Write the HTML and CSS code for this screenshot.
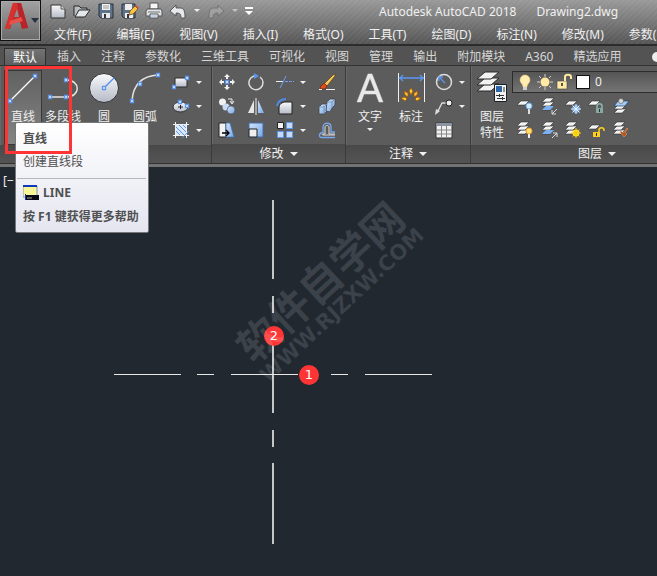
FILE: index.html
```
<!DOCTYPE html>
<html lang="zh-CN">
<head>
<meta charset="UTF-8">
<meta name="viewport" content="width=device-width, initial-scale=1.0">
<title>Autodesk AutoCAD 2018 - Drawing2.dwg</title>
<link rel="stylesheet" href="styles.css">
</head>
<body>

<!-- shapes shared by several icons -->
<svg class="defs" aria-hidden="true">
  <defs>
    <linearGradient id="silver" x1="0" y1="0" x2="0" y2="1">
      <stop offset="0" stop-color="#fbfbfd"/><stop offset="1" stop-color="#b4b9c6"/>
    </linearGradient>
    <linearGradient id="sky" x1="0" y1="0" x2="1" y2="1">
      <stop offset="0" stop-color="#d3e4fa"/><stop offset="1" stop-color="#76a7e6"/>
    </linearGradient>
    <linearGradient id="red" x1="0" y1="0" x2="1" y2="1">
      <stop offset="0" stop-color="#f0443c"/><stop offset="1" stop-color="#8d1219"/>
    </linearGradient>
    <g id="grip"><path d="M-1.5-1.5h3v3h-3z" fill="#fff" stroke="#5c96ee" stroke-width="1.3"/></g>
    <path id="sheet" d="M4 0h8L8 4H0z" fill="#f4f4f4" stroke="#333" stroke-width=".6"/>
    <g id="stack"><use href="#sheet" y="8"/><use href="#sheet" y="4"/><use href="#sheet"/></g>
  </defs>
</svg>

<header class="top">
  <button class="app" aria-label="A">
    <svg width="39" height="39" viewBox="0 0 39 39">
      <path d="M4 27 12 2h8l7 25h-6l-2-6h-8l-2 7zM13 16h5l-2-8z" fill="url(#red)" fill-rule="evenodd"/>
      <path d="M12 2h4l-7 25-5 1z" fill="#d8322f"/>
      <path d="m16 2 4 0 7 25-6 1z" fill="#b9242a"/>
      <path d="m9 20 11-4 2 4-14 4z" fill="#e8524a"/>
      <path d="M30 17h8l-4 5z" fill="#263242"/>
    </svg>
  </button>
  <div class="top-main">
    <div class="titlebar">
      <div class="quick">
        <button aria-label="新建"><svg width="18" height="18"><path d="M2 3h10l4 4v9H2z" fill="url(#silver)" stroke="#333"/><path d="M12 3v4h4" fill="#ddd" stroke="#555"/></svg></button>
        <button aria-label="打开"><svg width="18" height="18"><path d="M1 14V4h5l2 2h6v3" fill="#b9bcc0" stroke="#262626"/><path d="m2 15 4-7h11l-5 7z" fill="#e4e7ea" stroke="#262626"/></svg></button>
        <button aria-label="保存"><svg width="18" height="18"><path d="M2 2h14v14H4l-2-2z" fill="#5e7388" stroke="#26313c"/><path d="M5 2h8v6H5z" fill="#f2f2f2"/><path d="M6 4h6M6 6h6" stroke="#999"/><path d="M5 11h8v5H5z" fill="#e8e8e8"/><path d="M7 12h2v4H7z" fill="#333"/></svg></button>
        <button aria-label="另存为"><svg width="18" height="18"><path d="M1 2h13v14H3l-2-2z" fill="#5e7388" stroke="#26313c"/><path d="M4 2h7v6H4zM4 11h8v5H4z" fill="#eee"/><path d="M6 12h2v4H6z" fill="#333"/><path d="m8 13 1-4 5-5 3 3-5 5z" fill="#f7c545" stroke="#6c461c" stroke-width=".8"/><path d="m14 4 1-1 3 3-1 1z" fill="#d64a34"/></svg></button>
        <button aria-label="打印"><svg width="18" height="18"><path d="M5 1h8v6H5z" fill="#f6f6f6" stroke="#555"/><path d="M2 7h14l1 2v5H1V9z" fill="#dfe2e6" stroke="#555"/><path d="M3 10h12" stroke="#777"/><path d="M5 12h8v4H5z" fill="#fff" stroke="#555"/><path d="M6 14h6" stroke="#78a8e0"/></svg></button>
        <button aria-label="放弃"><svg width="18" height="18"><path d="m1 9 6-6v3h4c4 0 5 3 5 10h-4c0-4-1-5-5-5v3z" fill="#e6e8ec" stroke="#444" stroke-width=".8"/></svg></button>
        <button class="mini" aria-label="放弃列表"><svg width="8" height="6"><path d="M1 1h6L4 4z" fill="#f0f0f0"/></svg></button>
        <button aria-label="重做"><svg width="18" height="18"><path d="m17 9-6-6v3H7c-4 0-5 3-5 10h4c0-4 1-5 5-5v3z" fill="#a0a0a0" stroke="#6c6c6c" stroke-width=".8"/></svg></button>
        <button class="mini" aria-label="重做列表"><svg width="8" height="6"><path d="M1 1h6L4 4z" fill="#c4c4c4"/></svg></button>
        <button class="mini" aria-label="自定义"><svg width="8" height="8"><path d="M0 1h8" stroke="#fff" stroke-width="2"/><path d="M0 4h8L4 8z" fill="#fff"/></svg></button>
      </div>
      <div class="title"><span>Autodesk AutoCAD 2018</span><span>Drawing2.dwg</span></div>
    </div>
    <nav class="menu">
      <button>文件(F)</button>
      <button>编辑(E)</button>
      <button>视图(V)</button>
      <button>插入(I)</button>
      <button>格式(O)</button>
      <button>工具(T)</button>
      <button>绘图(D)</button>
      <button>标注(N)</button>
      <button>修改(M)</button>
      <button>参数(P)</button>
    </nav>
  </div>
</header>

<nav class="tabs">
  <button class="active">默认</button>
  <button>插入</button>
  <button>注释</button>
  <button>参数化</button>
  <button>三维工具</button>
  <button>可视化</button>
  <button>视图</button>
  <button>管理</button>
  <button>输出</button>
  <button>附加模块</button>
  <button>A360</button>
  <button>精选应用</button>
  <button class="more" aria-label="更多"><svg width="16" height="12"><rect width="16" height="10" y="1" rx="5" fill="#eee"/></svg></button>
</nav>

<main class="ribbon">
  <section class="panel draw">
    <div class="tools">
      <button class="big pressed"><svg width="36" height="36"><path d="m5 31 25-25" stroke="#fff" stroke-width="1.300"/><use href="#grip" x="5" y="31"/><use href="#grip" x="30" y="6"/></svg>直线</button>
      <button class="big"><svg width="36" height="36"><path d="M5 27h16c15 0 15-17 0-17" fill="none" stroke="#e4e4e4" stroke-width="1.500"/><use href="#grip" x="5" y="27"/><use href="#grip" x="21" y="27"/><use href="#grip" x="21" y="10"/></svg>多段线</button>
      <button class="big"><svg width="36" height="36"><circle cx="18" cy="18" r="14.500" fill="url(#silver)" stroke="#303236"/><path d="m18 18 10-10" stroke="#4e8bea" stroke-width="1.300"/><use href="#grip" x="18" y="18"/></svg>圆</button>
      <button class="big"><svg width="36" height="36"><path d="M5 31C6 16 14 6 31 5" fill="none" stroke="#e4e4e4" stroke-width="1.500"/><use href="#grip" x="5" y="31"/><use href="#grip" x="13" y="14"/><use href="#grip" x="31" y="5"/></svg>圆弧</button>
      <div class="smalls">
        <button class="drop" aria-label="矩形"><svg width="18" height="18"><path d="M3 5h12v9H3z" fill="url(#silver)" stroke="#2d2d2d"/><use href="#grip" x="2" y="14"/><use href="#grip" x="15" y="5"/></svg></button>
        <button class="drop" aria-label="椭圆"><svg width="18" height="18"><ellipse cx="8.500" cy="10" rx="7.500" ry="5" fill="url(#silver)" stroke="#333"/><path d="M6 10h5M8.500 8v4" stroke="#222"/><use href="#grip" x="8" y="5"/><use href="#grip" x="15" y="9"/></svg></button>
        <button class="drop" aria-label="图案填充"><svg width="18" height="18"><path d="M4 4h10v10H4z" fill="#dce9fb"/><path d="m4 10 4 4M4 6l8 8M7 4l7 7M11 4l3 3" stroke="#5c96ee"/><path d="M1 3.500h16M1 14.500h16M3.500 1v16M14.500 1v16" stroke="#f0f0f0"/><path d="m10 17 7-7" stroke="#5c96ee"/></svg></button>
      </div>
    </div>
    <h2></h2>
  </section>

  <section class="panel modify">
    <div class="tools">
      <button aria-label="移动"><svg width="18" height="18"><path d="M9 1 6 4h2v2h2V4h2zM9 17l-3-3h2v-2h2v2h2zM1 9l3-3v2h2v2H4v2zM17 9l-3-3v2h-2v2h2v2z" fill="#f0f0f0"/><use href="#grip" x="9" y="9"/></svg></button>
      <button aria-label="旋转"><svg width="18" height="18"><path d="M13 4a7 7 0 1 1-6-1" fill="none" stroke="#ddd" stroke-width="1.500"/><path d="m7 0 5 3-5 3z" fill="#5c96ee"/></svg></button>
      <button class="drop" aria-label="修剪"><svg width="18" height="18"><path d="M0 8.500h7" stroke="#eee"/><path d="M4 15 10 3" stroke="#6aa0f0"/><path d="M9 8.500h9" stroke="#6aa0f0" stroke-dasharray="3 1"/></svg></button>
      <button aria-label="删除"><svg width="18" height="18"><path d="m6 11 9-9 2-1v2L9 13z" fill="#f6c659" stroke="#5b3a17" stroke-width=".7"/><path d="m6 10 3 3-2 3-4 0-1-2z" fill="#dd4d18" stroke="#6b210a" stroke-width=".7"/><path d="M1 16.500h3M8 16.500h9" stroke="#eee"/></svg></button>
      <button aria-label="复制"><svg width="18" height="18"><circle cx="4.500" cy="5" r="3.500" fill="#f1f1f4"/><circle cx="8" cy="10" r="3.500" fill="#c9dcf6"/><circle cx="13" cy="13" r="4" fill="url(#sky)" stroke="#444" stroke-width=".6"/><path d="M10 2h4v4m-2-2 2 3 2-3" fill="none" stroke="#eee"/></svg></button>
      <button aria-label="镜像"><svg width="18" height="18"><path d="M7 3v13H1z" fill="#e7e7ea"/><path d="M11 3v13h6z" fill="url(#sky)"/><path d="M9 1v17" stroke="#eee"/></svg></button>
      <button class="drop" aria-label="圆角"><svg width="18" height="18"><path d="M3 17V11c0-4 3-6 7-6h6v12z" fill="url(#silver)" stroke="#222"/><path d="M1 9c1-5 4-7 9-7" fill="none" stroke="#4e8bea" stroke-width="2"/></svg></button>
      <button aria-label="分解"><svg width="18" height="18"><path d="m1 10 3-3h5v7l-3 3H1z" fill="url(#sky)" stroke="#444" stroke-width=".8"/><path d="m9 5 3-3h5v6l-3 3-2 4-4-1z" fill="url(#sky)" stroke="#444" stroke-width=".8"/><path d="M1 10h5v7M6 10l3-3M9 5h5v6M14 5l3-3" fill="none" stroke="#6e8bad" stroke-width=".8"/></svg></button>
      <button aria-label="拉伸"><svg width="18" height="18"><path d="M1 2h7v14H1z" fill="#f2f2f2" stroke="#222"/><path d="M8 2h4l4 14H8z" fill="url(#sky)" stroke="#3570bd" stroke-width=".7"/><path d="M4 12h7m-3-3 3 3-3 3" fill="none" stroke="#000" stroke-width="1.300"/></svg></button>
      <button aria-label="缩放"><svg width="18" height="18"><path d="M2 2h14v14H2z" fill="url(#sky)" stroke="#3e6da9"/><path d="M2 8h8v8H2z" fill="#eee" stroke="#222"/></svg></button>
      <button class="drop" aria-label="阵列"><svg width="18" height="18"><path d="M1.500 1.500h6v6h-6z" fill="#f2f2f2" stroke="#222"/><path d="M10.500 1.500h6v6h-6zM1.500 10.500h6v6h-6zM10.500 10.500h6v6h-6z" fill="#c5daf8" stroke="#5e97ea"/></svg></button>
      <button aria-label="偏移"><svg width="18" height="18"><path d="M17 16.500H4c-4 0-3-5 1-5V6c0-5 8-5 8 0v5h4" fill="none" stroke="#77a8ef" stroke-width="1.300"/><path d="M17 14H5c-1 0-1-1 0-1h2V6c0-2 4-2 4 0v7h6" fill="none" stroke="#ddd"/></svg></button>
    </div>
    <h2>修改</h2>
  </section>

  <section class="panel annotate">
    <div class="tools">
      <button class="big menu-big"><svg width="36" height="36"><path d="M5 32 16 4h4l11 28h-4l-3-8H12l-3 8zm8-11h10L18 8z" fill="#e8e8e8" stroke="#e8e8e8" stroke-width=".5"/></svg>文字</button>
      <button class="big"><svg width="36" height="36"><path d="M5.500 3v29M31.500 3v29" stroke="#f0f0f0"/><path d="M6 8h25m-21-3-3 3 3 3m17-6 3 3-3 3" fill="none" stroke="#5a98f5" stroke-width="1.300"/><path d="m18 18-2 3 2 4 2-4zM11 21l1 4 3 2v-4zM25 21l-4 2v4l3-2zM8 28l4-1 2 2-2 2zM28 28l-4-1-2 2 2 2z" fill="#ffca2b" stroke="#a6520d" stroke-width=".8"/></svg>标注</button>
      <div class="smalls">
        <button class="drop" aria-label="半径"><svg width="18" height="18"><circle cx="9" cy="9" r="7.500" fill="none" stroke="#ddd" stroke-width="1.500"/><path d="M4 8V4h4M4 4l6 6" fill="none" stroke="#5c96ee" stroke-width="1.300"/></svg></button>
        <button class="drop" aria-label="引线"><svg width="18" height="18"><path d="m2 16 5-10h4" fill="none" stroke="#ddd" stroke-width="1.300"/><path d="m0 18 1-6 4 2z" fill="#ddd"/><circle cx="14" cy="6" r="3" fill="#eee" stroke="#222"/></svg></button>
        <button aria-label="表格"><svg width="18" height="18"><path d="M1 2h16v15H1z" fill="#f2f2f2" stroke="#333"/><path d="M1 2h16v3H1z" fill="#8c93a1"/><path d="M1 9h16M1 13h16M6.500 5v12M11.500 5v12" stroke="#888"/></svg></button>
      </div>
    </div>
    <h2>注释</h2>
  </section>

  <section class="panel layers">
    <div class="tools">
      <button class="big two-line"><svg width="36" height="36"><g fill="#f2f2f2" stroke="#292929"><path d="M11 14h14l-8 7H3z"/><path d="M11 8h14l-8 7H3z"/><path d="M11 2h14l-8 7H3z"/></g><path d="M20.500 14.500h12v17h-12z" fill="#f2f2f2" stroke="#18202a"/><path d="M22 16h6v6h-6z" fill="#2c65a8"/><path d="M30 17v5" stroke="#333"/><path d="M22 25.500h8M23 28.500h8M25.500 24v3M28.500 27v3" stroke="#333"/></svg>图层<br>特性</button>
      <div class="layer-side">
        <div class="layer-state">
          <svg width="18" height="18"><path d="M4 7a5 5 0 0 1 10 0c0 3-3 4-3 7H7c0-3-3-4-3-7" fill="#ffedb0" stroke="#eacb75" stroke-width=".5"/><path d="M7 14h4v3H7z" fill="#d0d0d0"/></svg>
          <svg width="18" height="18"><circle cx="9" cy="9" r="4.500" fill="#ffe9a5"/><path d="M9 1v3M9 14v3M1 9h3M14 9h3M3 3l2 2M13 13l2 2M15 3l-2 2M3 15l2-2" stroke="#d5d0c0"/></svg>
          <svg width="18" height="18"><path d="M1 8h10v8H1z" fill="#ffe9a5" stroke="#444" stroke-width=".6"/><path d="M9 8V4c0-3 6-3 6 0v2" fill="none" stroke="#ffe9a5" stroke-width="2"/><path d="M6 10v3" stroke="#222" stroke-width="1.500"/></svg>
          <span class="swatch"></span>
          <select aria-label="图层"><option>0</option></select>
        </div>
        <div class="layer-tools">
          <button aria-label="关"><svg width="18" height="18"><use href="#sheet" x="1" y="4"/><circle cx="13" cy="9" r="3" fill="#d4e9fc" stroke="#6aa8ea"/><path d="M13 12v5" stroke="#ddd" stroke-width="2"/></svg></button>
          <button aria-label="隔离"><svg width="18" height="18"><use href="#stack" x="2" y="1"/><path d="M6 9h8l-4 4H2z" fill="#78b0f2"/><path d="m17 12-5 5m0-4v4h4" fill="none" stroke="#ddd"/></svg></button>
          <button aria-label="冻结"><svg width="18" height="18"><use href="#sheet" x="1" y="4"/><circle cx="12" cy="12" r="4" fill="#6c9ee0"/><path d="M12 7v10M7 12h10M8.500 8.500l7 7M15.500 8.500l-7 7" stroke="#eef6ff"/></svg></button>
          <button aria-label="锁定"><svg width="18" height="18"><use href="#sheet" x="0" y="4"/><path d="M9 12V9c0-3 5-3 5 0v3" fill="none" stroke="#91b5ae" stroke-width="1.500"/><path d="M8 11h7v5H8z" fill="#86aaa1"/><path d="M11.500 12v3" stroke="#263632"/></svg></button>
          <button aria-label="置为当前"><svg width="18" height="18"><use href="#sheet" x="2" y="12"/><use href="#sheet" x="2" y="8"/><path d="M6 4h11l-4 5H2z" fill="#a3cbf8" stroke="#243b55" stroke-width=".7"/><circle cx="9" cy="4" r="2.500" fill="#ddd" stroke="#555" stroke-width=".6"/></svg></button>
          <button aria-label="打开所有图层"><svg width="18" height="18"><use href="#stack" x="1" y="1"/><circle cx="13" cy="10" r="3" fill="#ffe36e" stroke="#ee9b2e"/><path d="M13 13v4" stroke="#eee" stroke-width="2"/></svg></button>
          <button aria-label="取消隔离"><svg width="18" height="18"><use href="#stack" x="2" y="1"/><path d="M6 9h8l-4 4H2z" fill="#78b0f2"/><path d="m12 17 5-5m-4 0h4v4" fill="none" stroke="#ddd"/></svg></button>
          <button aria-label="解冻所有图层"><svg width="18" height="18"><use href="#stack" x="1" y="1"/><circle cx="12" cy="12" r="3.500" fill="#ffe11f"/><path d="M12 7v10M7 12h10M8.500 8.500l7 7M15.500 8.500l-7 7" stroke="#f8c719"/></svg></button>
          <button aria-label="解锁"><svg width="18" height="18"><use href="#sheet" x="0" y="4"/><path d="M11 12V9c0-3 5-3 5 0v1" fill="none" stroke="#ffcd1e" stroke-width="1.500"/><path d="M5 11h7v5H5z" fill="#ffcd1e"/><path d="M8.500 12v3" stroke="#333"/></svg></button>
          <button aria-label="匹配图层"><svg width="18" height="18"><use href="#stack" x="1" y="1"/><path d="m8 11 4 5 3-3-2-2 3-3-1-1-4 5-2-2z" fill="#b6551d" stroke="#f0a466" stroke-width=".5"/></svg></button>
        </div>
      </div>
    </div>
    <h2>图层</h2>
  </section>
</main>

<section class="canvas">
  <span class="view-label">[−</span>
  <!-- center lines -->
  <svg class="drawing" width="440" height="380">
    <path d="M273 33v79m0 17v17m0 17v83m0 17v17m0 16v81" stroke="#c4c6c8" stroke-width="2"/>
    <path d="M114 207.500h67m16 0h17m17 0h67m33 0h17m17 0h67" stroke="#e8e8e8"/>
  </svg>
  <span class="marker one">1</span>
  <span class="marker two">2</span>
  <div class="watermark">
    <p class="site">软件自学网</p>
    <p class="url">WWW.RJZXW.COM</p>
  </div>
</section>

<div class="tooltip" role="tooltip">
  <strong>直线</strong>
  <p>创建直线段</p>
  <div class="command">
    <svg width="16" height="16"><path d="M0 1h14v11H0z" fill="#f7f79a" stroke="#8994a5"/><path d="M0 1h14" stroke="#1238bd" stroke-width="2"/><path d="M2 10h14v5H2z" fill="#080b16"/><path d="M4 13h5" stroke="#aaa"/><path d="M2.500 9v6" stroke="#1238bd"/></svg>
    <strong>LINE</strong>
  </div>
  <strong>按 F1 键获得更多帮助</strong>
</div>
<div class="highlight"></div>

</body>
</html>
```
FILE: styles.css
```
* {
  box-sizing: border-box;
}
body {
  position: relative;
  margin: 0;
  min-height: 100vh;
  display: flex;
  flex-direction: column;
  overflow: hidden;
  background: #212830;
  color: #f0f0f0;
  font: 12px/16px "Noto Sans", "Noto Sans CJK SC", sans-serif;
}
h2, p {
  margin: 0;
  font-size: 12px;
  font-weight: normal;
}
button {
  padding: 0;
  border: 0;
  background: none;
  color: inherit;
  font: inherit;
  white-space: nowrap;
  cursor: pointer;
}
svg {
  display: block;
  flex: none;
}
.defs {
  position: absolute;
  width: 0;
  height: 0;
}

/* title bar and menu */
.top {
  display: flex;
  height: 46px;
  border-bottom: 2px solid #2c2c2c;
  background:
    repeating-linear-gradient(135deg, rgba(255, 255, 255, 0.04) 0 2px, transparent 2px 4px),
    linear-gradient(#999, #555);
}
.app {
  flex: none;
  width: 41px;
  height: 41px;
  border: 1px solid #111;
  background: linear-gradient(#a2a2a2, #686868);
  box-shadow: inset 0 0 0 1px #aaa;
}
.top-main {
  flex: 1;
  min-width: 0;
}
.titlebar {
  display: flex;
  height: 24px;
  padding-left: 8px;
}
.quick {
  display: flex;
  align-items: center;
  gap: 6px;
  width: 330px;
  flex: none;
  padding-bottom: 2px;
}
.quick .mini {
  display: flex;
  justify-content: center;
  width: 8px;
}
.title {
  display: flex;
  gap: 20px;
  line-height: 24px;
  font-size: 12px;
  white-space: nowrap;
}
.menu {
  display: flex;
  gap: 25px;
  padding-left: 13px;
  line-height: 22px;
}

/* ribbon tabs */
.tabs {
  display: flex;
  gap: 2px;
  height: 20px;
  padding: 2px 0 0 4px;
  overflow: hidden;
  background: #535353;
  border-bottom: 1px solid #333;
  color: #d6d6d6;
}
.tabs button {
  padding: 0 9px;
  line-height: 17px;
}
.tabs .active {
  padding: 0 8px;
  border: 1px solid #303030;
  border-bottom: 0;
  background: linear-gradient(#737373, #5d5d5d);
  color: #fff;
}
.tabs .more {
  padding: 0;
  margin-left: 20px;
}

/* ribbon panels */
.ribbon {
  display: flex;
  height: 101px;
  overflow: hidden;
  border-bottom: 3px solid #737373;
  background: #5c5c5c;
}
.panel {
  display: flex;
  flex-direction: column;
  flex: none;
  border-right: 1px solid #3b3b3b;
  border-bottom: 1px solid #303030;
  box-shadow: inset 1px 0 #686868;
}
.panel .tools {
  display: flex;
  flex: 1;
  padding-top: 4px;
}
.panel h2 {
  display: flex;
  align-items: center;
  justify-content: center;
  gap: 6px;
  height: 19px;
  background: linear-gradient(#494949, #545454);
}
.panel h2:not(:empty)::after {
  content: "";
  border: 4px solid transparent;
  border-top-color: #f0f0f0;
  border-bottom: 0;
}
.draw {
  width: 212px;
}
.modify {
  width: 134px;
}
.annotate {
  width: 125px;
}
.layers {
  width: 253px;
}
.big {
  display: flex;
  flex-direction: column;
  align-items: center;
  gap: 3px;
  width: 40px;
  height: 75px;
}
.draw .tools {
  gap: 1px;
  padding-left: 4px;
}
.pressed {
  width: 38px;
  background: linear-gradient(#606060, #858585);
  box-shadow: inset 0 0 0 1px #383838;
}
.menu-big::after {
  content: "";
  border: 3px solid transparent;
  border-top-color: #f0f0f0;
  border-bottom: 0;
}
.smalls {
  display: grid;
  grid-auto-rows: 24px;
  align-content: start;
  margin-left: 6px;
}
.smalls button, .modify button, .layer-tools button {
  display: flex;
  align-items: center;
}
.drop {
  gap: 6px;
}
.drop::after {
  content: "";
  border: 3px solid transparent;
  border-top-color: #f0f0f0;
  border-bottom: 0;
}
.modify .tools {
  display: grid;
  grid-template-columns: 29px 29px 42px 18px;
  grid-auto-rows: 24px;
  padding-left: 6px;
}
.annotate .tools {
  gap: 1px;
  padding-left: 4px;
}
.annotate .smalls {
  margin-left: 3px;
}
.layers .tools {
  padding-left: 1px;
}
.layer-side {
  flex: 1;
}
.layer-state {
  display: flex;
  align-items: center;
  gap: 2px;
  height: 22px;
  margin-top: 1px;
  padding-left: 3px;
  border: 1px solid #2c2c2c;
  background: linear-gradient(#555, #747474);
}
.swatch {
  width: 14px;
  height: 14px;
  border: 1px solid #111;
  background: #fff;
}
.layer-state select {
  flex: 1;
  margin-left: 3px;
  padding: 0;
  border: 0;
  background: none;
  color: #f0f0f0;
  font: inherit;
  appearance: none;
}
.layer-tools {
  display: grid;
  grid-template-columns: repeat(5, 24px);
  grid-auto-rows: 24px;
  padding: 1px 0 0 4px;
}

/* drawing area */
.canvas {
  position: relative;
  flex: 1;
  overflow: hidden;
}
.view-label {
  position: absolute;
  left: 3px;
  top: 6px;
}
.drawing {
  position: absolute;
  left: 0;
  top: 0;
}
.watermark {
  position: absolute;
  left: 212px;
  top: 90px;
  width: 230px;
  transform: rotate(-43deg);
  color: rgba(255, 255, 255, 0.12);
  text-align: center;
  white-space: nowrap;
}
.watermark .site {
  font-size: 42px;
  line-height: 44px;
  font-weight: bold;
}
.watermark .url {
  font: bold 21px/20px "DejaVu Sans", sans-serif;
}
.marker {
  position: absolute;
  width: 20px;
  height: 20px;
  border-radius: 50%;
  background: #ff3535;
  color: #fff;
  font: 13px/20px "DejaVu Sans", sans-serif;
  text-align: center;
}
.marker.one {
  left: 299px;
  top: 198px;
}
.marker.two {
  left: 264px;
  top: 159px;
}

/* command tooltip */
.tooltip {
  position: absolute;
  left: 15px;
  top: 122px;
  width: 134px;
  padding: 8px 0 7px 7px;
  border: 1px solid #777;
  border-radius: 2px;
  background: linear-gradient(#fff, #e4e5f0);
  color: #505050;
  white-space: nowrap;
}
.tooltip p {
  margin-top: 7px;
}
.command {
  display: flex;
  align-items: center;
  gap: 4px;
  margin: 8px 2px 8px -6px;
  padding: 6px 0 0 6px;
  border-top: 1px solid #b7b7b7;
}
.highlight {
  position: absolute;
  left: 5px;
  top: 66px;
  width: 67px;
  height: 88px;
  border: 3px solid #ff3535;
}
```
